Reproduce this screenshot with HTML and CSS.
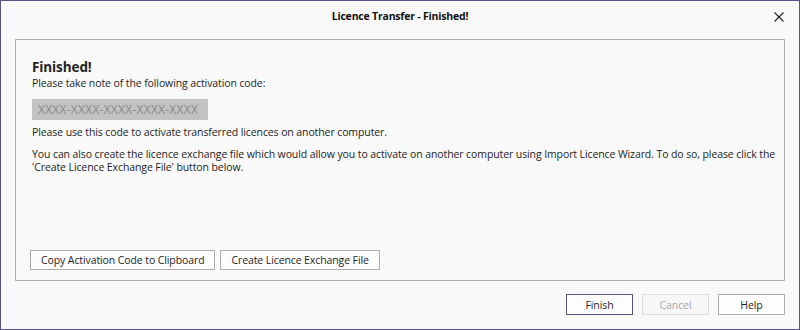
FILE: index.html
```html
<!DOCTYPE html>
<html lang="en">
<head>
    <meta charset="UTF-8">
    <title>Licence Transfer - Finished!</title>
    <link rel="stylesheet" href="styles.css">
</head>
<body>
    <div class="window">
        <div class="titlebar">
            <span class="title">Licence Transfer - Finished!</span>
            <button class="close-btn" title="Close">
                <svg width="10" height="10" viewBox="0 0 10 10">
                    <path d="M0.5 0.5 L9.5 9.5 M9.5 0.5 L0.5 9.5" stroke="#222" stroke-width="1.1" fill="none"/>
                </svg>
            </button>
        </div>

        <div class="panel">
            <h2>Finished!</h2>
            <p class="note">Please take note of the following activation code:</p>
            <div class="code">XXXX-XXXX-XXXX-XXXX-XXXX</div>
            <p>Please use this code to activate transferred licences on another computer.</p>
            <p>You can also create the licence exchange file which would allow you to activate on another computer using Import Licence Wizard. To do so, please click the 'Create Licence Exchange File' button below.</p>

            <div class="panel-actions">
                <button class="btn">Copy Activation Code to Clipboard</button>
                <button class="btn">Create Licence Exchange File</button>
            </div>
        </div>

        <div class="footer">
            <button class="btn btn-wide btn-default">Finish</button>
            <button class="btn btn-wide" disabled>Cancel</button>
            <button class="btn btn-wide">Help</button>
        </div>
    </div>
</body>
</html>
```

FILE: styles.css
```css
html, body {
    margin: 0;
    padding: 0;
}

body {
    font-family: "Open Sans", "Noto Sans", sans-serif;
    font-size: 10.5px;
    letter-spacing: -0.1px;
    color: #1e1e1e;
    background-color: #f9f9f9;
}

.window {
    box-sizing: border-box;
    width: 800px;
    height: 330px;
    border: 1px solid #5c5089;
    background-color: #f9f9f9;
    display: flex;
    flex-direction: column;
}

.titlebar {
    height: 29px;
    display: flex;
    align-items: center;
    justify-content: center;
    position: relative;
}

.title {
    font-weight: bold;
    font-size: 10.5px;
    letter-spacing: -0.2px;
    color: #111;
}

.close-btn {
    position: absolute;
    right: 15px;
    top: 11px;
    border: none;
    background: none;
    padding: 0;
    width: 10px;
    height: 10px;
    display: flex;
}

.panel {
    margin: 9px 14px 0 14px;
    height: 242px;
    box-sizing: border-box;
    border: 1px solid #acacac;
    padding: 17px 4px 10px 16px;
    display: flex;
    flex-direction: column;
}

.panel h2 {
    margin: 0;
    font-size: 13.5px;
    line-height: 20px;
    letter-spacing: -0.1px;
    font-weight: bold;
    color: #222;
}

.panel p {
    margin: 0 0 9px 0;
    line-height: 13px;
}

.panel p.note {
    margin-bottom: 9px;
}

.code {
    align-self: flex-start;
    width: 176px;
    height: 21px;
    box-sizing: border-box;
    background-color: #c2c2c2;
    color: #8a8a8a;
    font-size: 12px;
    letter-spacing: 0.25px;
    line-height: 21px;
    padding-left: 6px;
    margin-bottom: 6px;
}

.panel-actions {
    margin-top: auto;
    display: flex;
    gap: 5px;
    margin-left: -2px;
}

.btn {
    font-family: inherit;
    font-size: 10.5px;
    letter-spacing: -0.1px;
    color: #1e1e1e;
    background-color: #fdfdfd;
    border: 1px solid #adadad;
    height: 20px;
    padding: 0 10px;
    cursor: pointer;
}

.btn-wide {
    width: 67px;
    height: 21px;
    padding: 0;
}

.btn-default {
    border-color: #5c5089;
}

.btn:disabled {
    color: #a8a8a8;
    border-color: #dedede;
    background-color: #f7f7f7;
    cursor: default;
}

.footer {
    display: flex;
    justify-content: flex-end;
    gap: 9px;
    padding: 13px 14px 0 0;
}
```
